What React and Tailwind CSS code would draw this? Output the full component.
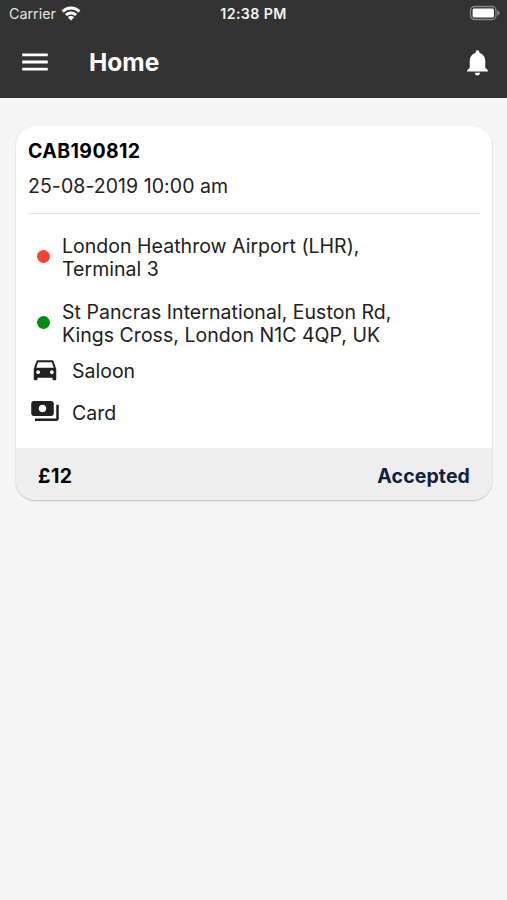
import React from "react";
import { MdDirectionsCar, MdMenu, MdNotifications, MdPayments } from "react-icons/md";

const booking = {
  id: "CAB190812",
  date: "25-08-2019 10:00 am",
  stops: [
    { lines: ["London Heathrow Airport (LHR),", "Terminal 3"], dot: "bg-[#f44336]" },
    {
      lines: ["St Pancras International, Euston Rd,", "Kings Cross, London N1C 4QP, UK"],
      dot: "bg-[#068a12]",
    },
  ],
  vehicle: "Saloon",
  payment: "Card",
  price: "£12",
  status: "Accepted",
};

const WifiIcon = () => (
  <svg width="20" height="15" viewBox="0 0 20 15" className="-mt-[2px] ml-[5px]">
    <g fill="none" stroke="#fff" strokeWidth="2.9">
      <path d="M1.6 5.5a12 12 0 0 1 16.8 0" />
      <path d="M4.9 9a7.4 7.4 0 0 1 10.2 0" />
    </g>
    <path d="M10 14.6l-3.2-3.3a4.6 4.6 0 0 1 6.4 0z" fill="#fff" />
  </svg>
);

const BatteryIcon = () => (
  <svg width="32" height="16" viewBox="0 0 32 16" className="-mt-[2px]">
    <rect x="1.5" y="1.5" width="25.5" height="13" rx="4" fill="none" stroke="#858585" strokeWidth="1.3" />
    <rect x="3.6" y="3.5" width="21.4" height="9" rx="1.5" fill="#fff" />
    <path d="M28.2 5.2c1.8.6 2.4 1.8 2.4 2.8s-.6 2.2-2.4 2.8z" fill="#858585" />
  </svg>
);

const Header = () => (
  <header className="h-[98px] bg-[#333333] text-white">
    <div className="grid h-7 grid-cols-3 items-center">
      <div className="flex items-center pl-[9px] text-[14.3px] text-[#e2e2e2]">
        Carrier
        <WifiIcon />
      </div>
      <div className="text-center text-[14.2px] font-semibold tracking-[0.4px] text-[#f2f2f2]">12:38 PM</div>
      <div className="flex justify-end pr-[6px]">
        <BatteryIcon />
      </div>
    </div>
    <div className="flex h-[68px] items-center pl-[18px] pr-[14px]">
      <MdMenu size={34} />
      <h1 className="ml-[37px] text-[24.5px] font-bold">Home</h1>
      <MdNotifications size={31} className="ml-auto" />
    </div>
  </header>
);

const Stop = ({ stop }) => (
  <div className="flex items-center pl-[9px]">
    <span className={`mr-3 mb-[3px] size-[13px] rounded-full ${stop.dot}`} />
    <p className="leading-[23px] tracking-[0.03px]">
      {stop.lines[0]}
      <br />
      {stop.lines[1]}
    </p>
  </div>
);

const BookingCard = () => (
  <article className="mt-7 mr-[15px] ml-4 overflow-hidden rounded-[20px] bg-white text-[19.5px] text-[#212121] shadow-[0_1px_2px_rgba(0,0,0,0.22)]">
    <div className="h-[322px] px-3 pt-[11px]">
      <h2 className="leading-7 font-bold tracking-[0.4px] text-black">{booking.id}</h2>
      <p className="mt-[7px] leading-7 tracking-[0.06px]">{booking.date}</p>
      <hr className="mt-[13px] mb-[21px] border-[#e2e2e2]" />
      <div className="flex flex-col gap-5">
        {booking.stops.map((stop) => (
          <Stop key={stop.lines[0]} stop={stop} />
        ))}
      </div>
      <div className="mt-[7px] flex h-[30px] items-center gap-3 pl-[2px]">
        <MdDirectionsCar size={30} />
        <span className="mt-[6px]">{booking.vehicle}</span>
      </div>
      <div className="mt-3 flex h-[30px] items-center gap-3 pl-[2px]">
        <MdPayments size={30} />
        <span className="mt-[6px]">{booking.payment}</span>
      </div>
    </div>
    <footer className="flex h-[52px] items-center justify-between bg-[#eeeeee] px-[22px] pt-[5px] font-bold">
      <span className="tracking-[0.5px] text-black">{booking.price}</span>
      <span className="tracking-[0.1px] text-[#14213d]">{booking.status}</span>
    </footer>
  </article>
);

export default function App() {
  return (
    <div className="min-h-screen bg-[#f5f5f5] font-['Inter',sans-serif]">
      <Header />
      <BookingCard />
    </div>
  );
}
